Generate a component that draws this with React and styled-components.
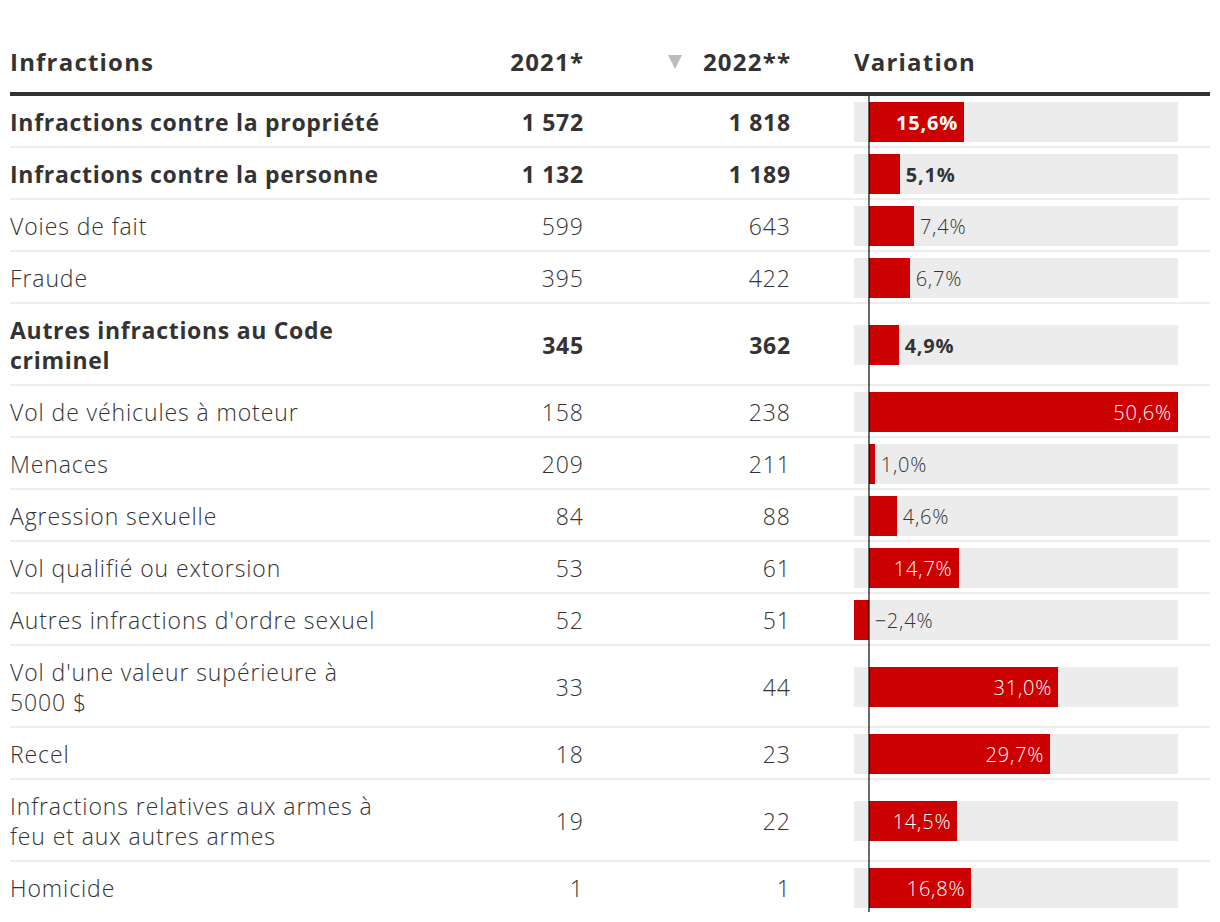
import React from 'react';
import styled, { createGlobalStyle } from 'styled-components';

const Global = createGlobalStyle`
  html, body { margin: 0; padding: 0; background: #fff; }
  body {
    font-family: "Open Sans", "Noto Sans", sans-serif;
    color: #333;
    -webkit-font-smoothing: antialiased;
  }
`;

const MIN = -2.4;
const MAX = 50.6;
const TRACK = 324;
const SCALE = TRACK / (MAX - MIN);
const ZERO = -MIN * SCALE;
const NB = '\u00a0';

const rows = [
  { name: 'Infractions contre la propriété', a: `1${NB}572`, b: `1${NB}818`, v: 15.6, bold: true },
  { name: 'Infractions contre la personne', a: `1${NB}132`, b: `1${NB}189`, v: 5.1, bold: true },
  { name: 'Voies de fait', a: '599', b: '643', v: 7.4 },
  { name: 'Fraude', a: '395', b: '422', v: 6.7 },
  { name: 'Autres infractions au Code criminel', a: '345', b: '362', v: 4.9, bold: true },
  { name: 'Vol de véhicules à moteur', a: '158', b: '238', v: 50.6 },
  { name: 'Menaces', a: '209', b: '211', v: 1.0 },
  { name: 'Agression sexuelle', a: '84', b: '88', v: 4.6 },
  { name: 'Vol qualifié ou extorsion', a: '53', b: '61', v: 14.7 },
  { name: "Autres infractions d'ordre sexuel", a: '52', b: '51', v: -2.4 },
  { name: "Vol d'une valeur supérieure à 5000\u00a0$", a: '33', b: '44', v: 31.0 },
  { name: 'Recel', a: '18', b: '23', v: 29.7 },
  { name: 'Infractions relatives aux armes à feu et aux autres armes', a: '19', b: '22', v: 14.5 },
  { name: 'Homicide', a: '1', b: '1', v: 16.8 },
];

const fmt = (v) => (v < 0 ? '\u2212' : '') + Math.abs(v).toFixed(1).replace('.', ',') + '%';

const Table = styled.div`
  width: 1200px;
  margin-left: 10px;
`;

const cols = `380px 193px 207px 1fr`;

const HeaderRow = styled.div`
  display: grid;
  grid-template-columns: ${cols};
  align-items: end;
  padding: 47px 0 15px;
  border-bottom: 4px solid #333;
  font-size: 24px;
  line-height: 30px;
  font-weight: 700;
  letter-spacing: 1.2px;
`;

const HeadCell = styled.div`
  text-align: ${(p) => (p.$right ? 'right' : 'left')};
  padding-left: ${(p) => (p.$var ? '64px' : '0')};
  margin-right: ${(p) => (p.$right ? '-1.2px' : '0')};
`;

const SortMark = styled.span`
  display: inline-block;
  width: 0;
  height: 0;
  border-left: 7px solid transparent;
  border-right: 7px solid transparent;
  border-top: 14px solid #bbb;
  margin-right: 21px;
  vertical-align: 2px;
`;

const Row = styled.div`
  display: grid;
  grid-template-columns: ${cols};
  align-items: center;
  border-bottom: 2px solid #ededed;
  &:last-child {
    border-bottom: none;
  }
`;

const Cell = styled.div`
  padding: 11px 0 9px;
  font-size: 23px;
  line-height: 30px;
  font-weight: ${(p) => (p.$bold ? 700 : 300)};
  letter-spacing: ${(p) => (p.$bold ? '0.7px' : '0.9px')};
  text-align: ${(p) => (p.$right ? 'right' : 'left')};
  padding-right: ${(p) => (p.$right ? '0' : '4px')};
  margin-right: ${(p) => (p.$right ? '-0.8px' : '0')};
`;

const VarCell = styled.div`
  position: relative;
  align-self: stretch;
  display: flex;
  align-items: center;
  padding-left: 64px;
  &::after {
    content: '';
    position: absolute;
    left: ${64 + ZERO - 1}px;
    top: 0;
    bottom: -2px;
    width: 2px;
    background: rgba(0, 0, 0, 0.58);
    z-index: 2;
  }
`;

const Track = styled.div`
  position: relative;
  width: ${TRACK}px;
  height: 40px;
  margin-top: 2px;
  background: #ececec;
`;

const Bar = styled.div`
  position: absolute;
  top: 0;
  bottom: 0;
  background: #cc0000;
`;

const Label = styled.span`
  position: absolute;
  top: 0;
  bottom: 0;
  display: flex;
  align-items: center;
  padding-top: 2px;
  font-size: 20px;
  line-height: 1;
  letter-spacing: 0.8px;
  white-space: nowrap;
  font-weight: ${(p) => (p.$bold ? 700 : 300)};
  color: ${(p) => (p.$inside ? '#fff' : '#333')};
`;

function Variation({ v, bold }) {
  const w = Math.abs(v) * SCALE;
  const left = v >= 0 ? ZERO : ZERO - w;
  const inside = v > 0 && w > 70;
  const labelStyle = inside
    ? { right: TRACK - (ZERO + w) + 6 }
    : { left: ZERO + Math.max(v, 0) * SCALE + 6 };
  return (
    <VarCell>
      <Track>
        <Bar style={{ left, width: w }} />
        <Label $inside={inside} $bold={bold} style={labelStyle}>
          {fmt(v)}
        </Label>
      </Track>
    </VarCell>
  );
}

export default function App() {
  return (
    <>
      <Global />
      <Table>
        <HeaderRow>
          <HeadCell>Infractions</HeadCell>
          <HeadCell $right>2021*</HeadCell>
          <HeadCell $right>
            <SortMark />
            2022**
          </HeadCell>
          <HeadCell $var>Variation</HeadCell>
        </HeaderRow>
        {rows.map((r) => (
          <Row key={r.name}>
            <Cell $bold={r.bold}>{r.name}</Cell>
            <Cell $bold={r.bold} $right>{r.a}</Cell>
            <Cell $bold={r.bold} $right>{r.b}</Cell>
            <Variation v={r.v} bold={r.bold} />
          </Row>
        ))}
      </Table>
    </>
  );
}
